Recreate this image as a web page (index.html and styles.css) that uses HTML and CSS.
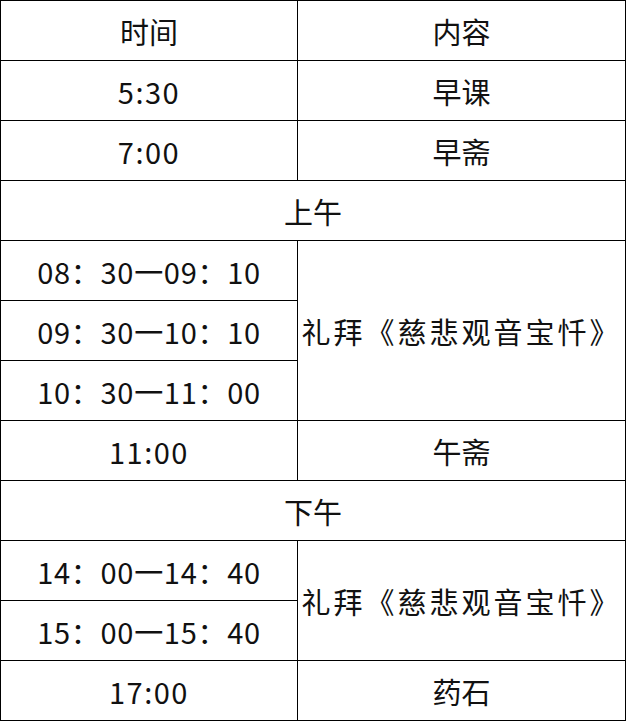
FILE: index.html
```html
<!DOCTYPE html>
<html lang="zh">
<head>
<meta charset="utf-8">
<link rel="stylesheet" href="styles.css">
</head>
<body>
<div class="schedule">
  <div class="cell">时间</div>
  <div class="cell">内容</div>
  <div class="cell time">5:30</div>
  <div class="cell">早课</div>
  <div class="cell time">7:00</div>
  <div class="cell">早斋</div>
  <div class="cell span2">上午</div>
  <div class="cell range">08：30一09：10</div>
  <div class="cell rows3 long">礼拜《慈悲观音宝忏》</div>
  <div class="cell range">09：30一10：10</div>
  <div class="cell range">10：30一11：00</div>
  <div class="cell time">11:00</div>
  <div class="cell">午斋</div>
  <div class="cell span2">下午</div>
  <div class="cell range">14：00一14：40</div>
  <div class="cell rows2 long">礼拜《慈悲观音宝忏》</div>
  <div class="cell range">15：00一15：40</div>
  <div class="cell time">17:00</div>
  <div class="cell">药石</div>
</div>
</body>
</html>
```
FILE: styles.css
```css
html, body {
  margin: 0;
  padding: 0;
  background: #fff;
}
.schedule {
  display: grid;
  grid-template-columns: 296px 327px;
  grid-auto-rows: 59px;
  gap: 1px;
  padding: 1px;
  background: #000;
  width: 624px;
  font-family: "Noto Sans CJK SC", sans-serif;
  font-size: 29px;
  color: #111;
}
.cell {
  background: #fff;
  display: flex;
  align-items: center;
  justify-content: center;
  white-space: nowrap;
}
.time {
  letter-spacing: 1.5px;
}
.range {
  letter-spacing: 0.7px;
}
.long {
  letter-spacing: 3px;
}
.span2 {
  grid-column: 1 / span 2;
}
.rows3 {
  grid-column: 2;
  grid-row: span 3;
}
.rows2 {
  grid-column: 2;
  grid-row: span 2;
}
```
